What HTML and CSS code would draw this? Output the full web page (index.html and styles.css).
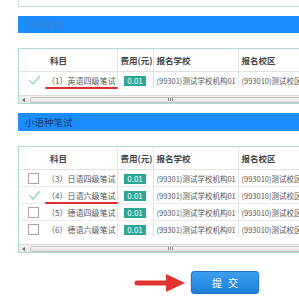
FILE: index.html
```html
<!DOCTYPE html>
<html lang="zh-CN">
<head>
  <meta charset="UTF-8" />
  <meta name="viewport" content="width=device-width, initial-scale=1.0"/>
  <title>报名科目</title>
  <link rel="stylesheet" href="styles.css">
</head>
<body>

<div class="page">
  <div class="prev-box"></div>

  <div class="section-title faint">英语笔试</div>
  <div class="table-box">
    <table class="exam-table">
      <colgroup>
        <col class="c-check"><col class="c-name"><col class="c-fee"><col class="c-school"><col class="c-campus">
      </colgroup>
      <thead>
        <tr>
          <th></th>
          <th class="name">科目</th>
          <th>费用(元)</th>
          <th>报名学校</th>
          <th>报名校区</th>
        </tr>
      </thead>
      <tbody>
        <tr>
          <td class="check">
            <svg class="tick" width="13" height="10" viewBox="0 0 13 10"><polyline points="1,5 5,9 12,1" /></svg>
          </td>
          <td class="name"><span class="marked">（1）英语四级笔试</span></td>
          <td class="fee"><span class="badge">0.01</span></td>
          <td class="place">(99301)测试学校机构01</td>
          <td class="place">(993010)测试校区</td>
        </tr>
      </tbody>
    </table>
    <div class="hscroll">
      <span class="arrow-left"></span>
      <span class="thumb"><span class="grip"></span></span>
    </div>
  </div>

  <div class="section-title">小语种笔试</div>
  <div class="table-box">
    <table class="exam-table">
      <colgroup>
        <col class="c-check"><col class="c-name"><col class="c-fee"><col class="c-school"><col class="c-campus">
      </colgroup>
      <thead>
        <tr>
          <th></th>
          <th class="name">科目</th>
          <th>费用(元)</th>
          <th>报名学校</th>
          <th>报名校区</th>
        </tr>
      </thead>
      <tbody>
        <tr>
          <td class="check"><span class="box"></span></td>
          <td class="name">（3）日语四级笔试</td>
          <td class="fee"><span class="badge">0.01</span></td>
          <td class="place">(99301)测试学校机构01</td>
          <td class="place">(993010)测试校区</td>
        </tr>
        <tr>
          <td class="check">
            <svg class="tick" width="13" height="10" viewBox="0 0 13 10"><polyline points="1,5 5,9 12,1" /></svg>
          </td>
          <td class="name"><span class="marked">（4）日语六级笔试</span></td>
          <td class="fee"><span class="badge">0.01</span></td>
          <td class="place">(99301)测试学校机构01</td>
          <td class="place">(993010)测试校区</td>
        </tr>
        <tr>
          <td class="check"><span class="box"></span></td>
          <td class="name">（5）德语四级笔试</td>
          <td class="fee"><span class="badge">0.01</span></td>
          <td class="place">(99301)测试学校机构01</td>
          <td class="place">(993010)测试校区</td>
        </tr>
        <tr>
          <td class="check"><span class="box"></span></td>
          <td class="name">（6）德语六级笔试</td>
          <td class="fee"><span class="badge">0.01</span></td>
          <td class="place">(99301)测试学校机构01</td>
          <td class="place">(993010)测试校区</td>
        </tr>
      </tbody>
    </table>
    <div class="hscroll">
      <span class="arrow-left"></span>
      <span class="thumb"><span class="grip"></span></span>
    </div>
  </div>

  <div class="actions">
    <svg class="pointer" width="52" height="20" viewBox="0 0 52 20">
      <line x1="3" y1="10" x2="36" y2="10" />
      <polygon points="32,1 51,10 32,19" />
    </svg>
    <button class="submit">提交</button>
  </div>
</div>

</body>
</html>
```

FILE: styles.css
```css
body {
  margin: 0;
  background-color: #fff;
  font-family: "Noto Sans CJK SC", "Noto Sans", sans-serif;
  overflow: hidden;
}
.page {
  width: 400px;
  padding-left: 18px;
}
.prev-box {
  height: 6px;
  border: 1px solid #b9e1da;
  border-top: none;
}
.section-title {
  margin-top: 9px;
  height: 18px;
  line-height: 18px;
  padding-left: 7px;
  background-color: #1b8dff;
  color: #1b3560;
  font-size: 9.5px;
}
.section-title.faint {
  color: #3d84d2;
  height: 17px;
  line-height: 17px;
}
.table-box {
  margin-top: 15px;
  border: 1px solid #aadcd3;
}
.exam-table {
  border-collapse: collapse;
  table-layout: fixed;
  width: 339px;
}
.c-check {
  width: 26px;
}
.c-name {
  width: 72px;
}
.c-fee {
  width: 36px;
}
.c-school {
  width: 85px;
}
.exam-table th {
  height: 22px;
  padding: 0 0 0 3px;
  text-align: left;
  font-size: 8.5px;
  font-weight: bold;
  color: #444;
  border-bottom: 1px solid #e2e2e2;
}
.exam-table th.name {
  padding-left: 5px;
}
.exam-table td {
  height: 16px;
  padding: 0 0 0 3px;
  font-size: 8px;
  color: #555;
  white-space: nowrap;
  overflow: hidden;
  border-bottom: 1px solid #ececec;
}
.exam-table tbody tr:last-child td {
  border-bottom: none;
}
.exam-table th + th + th,
.exam-table td + td + td {
  border-left: 1px solid #e4e4e4;
}
.exam-table td.check {
  padding-left: 9px;
}
.exam-table td.name {
  padding-left: 2px;
  overflow: visible;
}
.exam-table td.fee {
  padding: 0;
  text-align: center;
}
.exam-table td.place {
  font-size: 7.5px;
}
.tick {
  display: block;
}
.tick polyline {
  fill: none;
  stroke: #93d1c6;
  stroke-width: 1.2;
}
.box {
  display: block;
  width: 9px;
  height: 9px;
  border: 1px solid #a8a8a8;
  background-color: #fff;
}
.badge {
  display: inline-block;
  padding: 0 3px;
  line-height: 10px;
  background-color: #2fa596;
  color: #fff;
  font-size: 8px;
}
.marked {
  position: relative;
}
.marked::after {
  content: "";
  position: absolute;
  left: -2px;
  right: -3px;
  bottom: -3px;
  height: 2px;
  border-radius: 1px;
  background-color: #d9302c;
}
.hscroll {
  margin-top: 7px;
  height: 7px;
  display: flex;
  align-items: center;
  background: linear-gradient(#f3f3f3, #e2e2e2);
  border-top: 1px solid #dadada;
}
.arrow-left {
  width: 0;
  height: 0;
  margin: 0 5px 0 3px;
  border-top: 2px solid transparent;
  border-bottom: 2px solid transparent;
  border-right: 3px solid #666;
}
.thumb {
  box-sizing: border-box;
  width: 280px;
  height: 6px;
  display: flex;
  justify-content: center;
  align-items: center;
  background: linear-gradient(#fbfbfb, #dddddd);
  border: 1px solid #c4c4c4;
  border-radius: 2px;
}
.grip {
  width: 5px;
  height: 3px;
  background: repeating-linear-gradient(90deg, #888 0 1px, transparent 1px 2px);
}
.actions {
  margin-top: 18px;
  display: flex;
  align-items: center;
}
.pointer {
  margin-left: 116px;
  margin-right: 5px;
}
.pointer line {
  stroke: #e0342f;
  stroke-width: 5;
  stroke-linecap: round;
}
.pointer polygon {
  fill: #e0342f;
}
.submit {
  width: 68px;
  height: 23px;
  padding: 0 0 0 6px;
  border: 1px solid #1f74c4;
  border-radius: 3px;
  background: linear-gradient(#3d9ff0, #1e7fd8);
  box-shadow: 0 1px 2px rgba(0,0,0,0.25);
  color: #fff;
  font-family: "Noto Sans CJK SC", sans-serif;
  font-size: 10px;
  letter-spacing: 6px;
  cursor: pointer;
}
```
